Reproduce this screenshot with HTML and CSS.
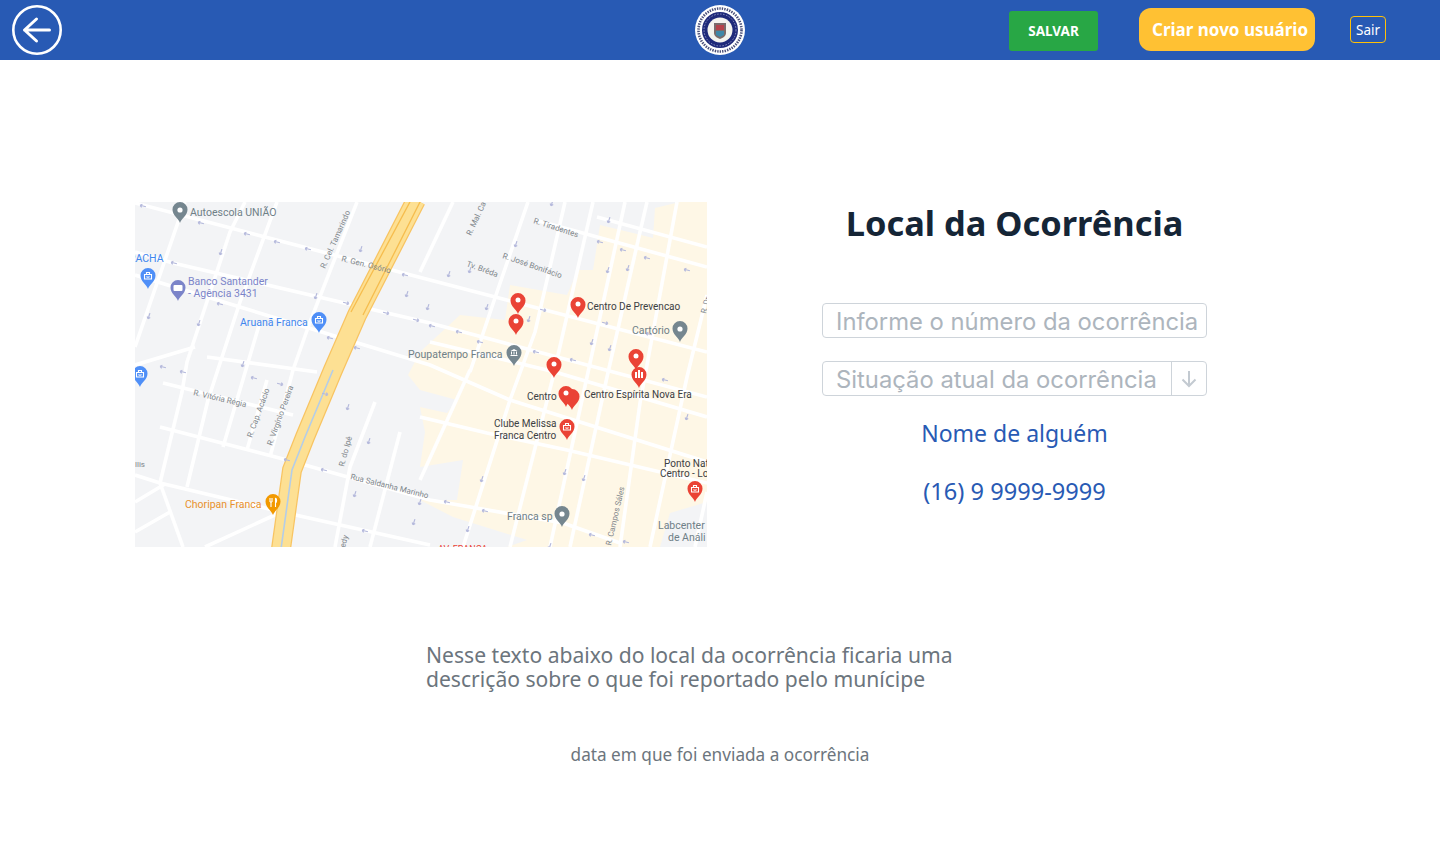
FILE: index.html
```html
<!DOCTYPE html>
<html lang="pt-BR">
<head>
    <meta charset="UTF-8">
    <meta name="viewport" content="width=device-width, initial-scale=1.0">
    <title>Local da Ocorrência</title>
    <link rel="stylesheet" href="styles.css">
</head>
<body>
    <header class="topbar">
        <a class="back" href="#" aria-label="Voltar">
            <svg width="50" height="50" viewBox="0 0 50 50">
                <circle cx="25" cy="25" r="23.7" class="back-ring"/>
                <path d="M12.5 25H37.5M24.5 14L12.5 25L24.5 36" class="back-arrow"/>
            </svg>
        </a>
        <svg class="logo" width="50" height="50" viewBox="0 0 50 50">
            <circle cx="25" cy="25" r="25" fill="#fff"/>
            <circle cx="25" cy="25" r="21.5" fill="none" stroke="#4a4f78" stroke-width="2.6" stroke-dasharray="1.4 1.1"/>
            <circle cx="25" cy="25" r="18" fill="#1f2a7a"/>
            <circle cx="25" cy="25" r="16" fill="none" stroke="#8f95c4" stroke-width="1" stroke-dasharray="1.5 1.5"/>
            <circle cx="25" cy="25" r="12.5" fill="#f4f3ee"/>
            <path d="M19 18H31V28C31 31 28 33 25 34C22 33 19 31 19 28Z" fill="#7a6a6a"/>
            <path d="M21 20H29V25H21Z" fill="#b5424a"/>
            <path d="M21 26H29V30L25 32L21 30Z" fill="#3f87a8"/>
        </svg>
        <div class="actions">
            <button class="btn-save">SALVAR</button>
            <button class="btn-new">Criar novo usuário</button>
            <button class="btn-exit">Sair</button>
        </div>
    </header>

    <main>
        <section class="details">
            <svg class="map" width="572" height="345" viewBox="0 0 572 345">
                <defs>
                    <g id="pin">
                        <path d="M0 13C-1.5 8.5-7.5 5.5-7.5-.5A7.5 7.5 0 1 1 7.5-.5C7.5 5.5 1.5 8.5 0 13Z"/>
                    </g>
                    <g id="bag">
                        <path d="M-3.5-1.5H3.5V3H-3.5ZM-1.5-1.5V-3.5H1.5V-1.5M-1.5 .5C-1 1.5 1 1.5 1.5 .5" class="bag-icon"/>
                    </g>
                    <path id="tick" d="M-3 0H3M-3 0L-1 -1.6M-3 0L-1 1.6"/>
                </defs>

                <rect width="572" height="345" fill="#f3f4f6"/>
                <path d="M545 0H572V345H372L392 338L318 315L285 298L322 298L328 258L285 265L290 230L285 205L312 211L322 198L285 188L273 173L285 150L325 113L370 118L375 83L432 93L443 68L458 68L462 43L465 23L498 31L518 36L520 6Z" fill="#fef7e6"/>
                <path d="M535 311L572 300V345H525Z" fill="#f3f4f6"/>

                <g class="roads">
                    <path d="M0 1L295 78L572 150"/>
                    <path d="M0 50L38 61L295 121L572 195"/>
                    <path d="M0 73L295 163L375 198L572 260"/>
                    <path d="M28 181L158 213"/>
                    <path d="M25 225L152 258L295 298L428 321L485 341"/>
                    <path d="M0 273L25 281L138 308L295 343"/>
                    <path d="M285 215L352 231L432 248L572 281"/>
                    <path d="M295 140L420 170L572 215"/>
                    <path d="M462 15L572 45"/>
                    <path d="M400 18L572 65"/>
                    <path d="M0 145L50 0"/>
                    <path d="M25 281L47 190L52 160L95 30L110 0"/>
                    <path d="M52 285L73 198L105 100L142 0"/>
                    <path d="M88 245L125 120"/>
                    <path d="M135 255L158 168L175 120L222 0"/>
                    <path d="M112 248L132 178"/>
                    <path d="M285 70L318 0"/>
                    <path d="M335 170L362 90L393 0"/>
                    <path d="M285 278L335 168"/>
                    <path d="M328 345L375 198L400 130L430 0"/>
                    <path d="M375 345L418 175L458 0"/>
                    <path d="M415 345L452 175L490 0"/>
                    <path d="M435 345L472 175L505 30L512 0"/>
                    <path d="M485 345L505 201L542 0"/>
                    <path d="M515 345L552 175L572 93"/>
                    <path d="M560 345L572 290"/>
                    <path d="M0 163L60 145"/>
                    <path d="M200 345L215 265L240 200"/>
                    <path d="M235 345L265 230"/>
                    <path d="M25 281L48 345"/>
                    <path d="M0 300L30 282"/>
                    <path d="M70 345L142 312"/>
                    <path d="M0 330L35 310"/>
                    <path d="M72 155L182 170"/>
                </g>

                <path d="M281-2L222 113L198 168L170 235L157 268L146 347" class="hw-edge"/>
                <path d="M281-2L222 113L198 168L170 235L157 268L146 347" class="hw-fill"/>
                <path d="M276-2L216 110M286-2L228 113" class="hw-line"/>
                <path d="M198 168L170 235L157 268L146 347" class="hw-water"/>

                <g class="ticks">
                    <use href="#tick" transform="translate(8 4) rotate(14)"/>
                    <use href="#tick" transform="translate(66 21) rotate(14)"/>
                    <use href="#tick" transform="translate(112 32) rotate(14)"/>
                    <use href="#tick" transform="translate(142 40) rotate(14)"/>
                    <use href="#tick" transform="translate(173 47) rotate(14)"/>
                    <use href="#tick" transform="translate(270 73) rotate(14)"/>
                    <use href="#tick" transform="translate(39 61) rotate(14)"/>
                    <use href="#tick" transform="translate(211 101) rotate(194)"/>
                    <use href="#tick" transform="translate(251 111) rotate(194)"/>
                    <use href="#tick" transform="translate(281 118) rotate(194)"/>
                    <use href="#tick" transform="translate(85 102) rotate(14)"/>
                    <use href="#tick" transform="translate(195 136) rotate(14)"/>
                    <use href="#tick" transform="translate(222 146) rotate(14)"/>
                    <use href="#tick" transform="translate(28 165) rotate(14)"/>
                    <use href="#tick" transform="translate(48 170) rotate(14)"/>
                    <use href="#tick" transform="translate(119 176) rotate(14)"/>
                    <use href="#tick" transform="translate(145 182) rotate(194)"/>
                    <use href="#tick" transform="translate(190 192) rotate(194)"/>
                    <use href="#tick" transform="translate(152 258) rotate(14)"/>
                    <use href="#tick" transform="translate(189 268) rotate(14)"/>
                    <use href="#tick" transform="translate(230 329) rotate(14)"/>
                    <use href="#tick" transform="translate(297 124) rotate(14)"/>
                    <use href="#tick" transform="translate(324 130) rotate(14)"/>
                    <use href="#tick" transform="translate(345 140) rotate(14)"/>
                    <use href="#tick" transform="translate(408 108) rotate(194)"/>
                    <use href="#tick" transform="translate(470 121) rotate(194)"/>
                    <use href="#tick" transform="translate(514 132) rotate(14)"/>
                    <use href="#tick" transform="translate(465 40) rotate(14)"/>
                    <use href="#tick" transform="translate(488 48) rotate(14)"/>
                    <use href="#tick" transform="translate(512 56) rotate(14)"/>
                    <use href="#tick" transform="translate(552 68) rotate(14)"/>
                    <use href="#tick" transform="translate(401 150) rotate(14)"/>
                    <use href="#tick" transform="translate(438 158) rotate(14)"/>
                    <use href="#tick" transform="translate(530 178) rotate(14)"/>
                    <use href="#tick" transform="translate(312 300) rotate(14)"/>
                    <use href="#tick" transform="translate(350 309) rotate(14)"/>
                    <use href="#tick" transform="translate(457 333) rotate(14)"/>
                    <use href="#tick" transform="translate(491 340) rotate(14)"/>
                    <use href="#tick" transform="translate(86 50) rotate(-72)"/>
                    <use href="#tick" transform="translate(14 114) rotate(-72)"/>
                    <use href="#tick" transform="translate(64 121) rotate(-72)"/>
                    <use href="#tick" transform="translate(181 94) rotate(-72)"/>
                    <use href="#tick" transform="translate(272 92) rotate(-72)"/>
                    <use href="#tick" transform="translate(226 47) rotate(-72)"/>
                    <use href="#tick" transform="translate(108 162) rotate(-72)"/>
                    <use href="#tick" transform="translate(213 205) rotate(-72)"/>
                    <use href="#tick" transform="translate(234 239) rotate(-72)"/>
                    <use href="#tick" transform="translate(220 292) rotate(-72)"/>
                    <use href="#tick" transform="translate(285 300) rotate(-72)"/>
                    <use href="#tick" transform="translate(279 320) rotate(-72)"/>
                    <use href="#tick" transform="translate(335 68) rotate(-72)"/>
                    <use href="#tick" transform="translate(381 42) rotate(-72)"/>
                    <use href="#tick" transform="translate(417 1) rotate(-72)"/>
                    <use href="#tick" transform="translate(474 18) rotate(-72)"/>
                    <use href="#tick" transform="translate(473 68) rotate(-72)"/>
                    <use href="#tick" transform="translate(493 66) rotate(-72)"/>
                    <use href="#tick" transform="translate(314 72) rotate(-72)"/>
                    <use href="#tick" transform="translate(293 105) rotate(-72)"/>
                    <use href="#tick" transform="translate(352 105) rotate(-72)"/>
                    <use href="#tick" transform="translate(394 117) rotate(-72)"/>
                    <use href="#tick" transform="translate(457 140) rotate(-72)"/>
                    <use href="#tick" transform="translate(475 146) rotate(-72)"/>
                    <use href="#tick" transform="translate(552 215) rotate(-72)"/>
                    <use href="#tick" transform="translate(347 277) rotate(-72)"/>
                    <use href="#tick" transform="translate(430 270) rotate(-72)"/>
                    <use href="#tick" transform="translate(449 276) rotate(-72)"/>
                    <use href="#tick" transform="translate(333 327) rotate(-72)"/>
                    <use href="#tick" transform="translate(415 344) rotate(-72)"/>
                </g>

                <g class="street">
                    <text transform="translate(206 59) rotate(14)">R. Gen. Osório</text>
                    <text transform="translate(190 67) rotate(-66)">R. Cel. Tamarindo</text>
                    <text transform="translate(398 21) rotate(18)">R. Tiradentes</text>
                    <text transform="translate(367 56) rotate(19)">R. José Bonifácio</text>
                    <text transform="translate(331 64) rotate(20)">Tv. Brêda</text>
                    <text transform="translate(336 34) rotate(-65)">R. Mal. Ca</text>
                    <text transform="translate(571 112) rotate(-75)">R. Dr</text>
                    <text transform="translate(58 193) rotate(13)">R. Vitória Régia</text>
                    <text transform="translate(117 236) rotate(-70)">R. Cap. Acácio</text>
                    <text transform="translate(137 244) rotate(-70)">R. Virgínio Pereira</text>
                    <text transform="translate(209 265) rotate(-75)">R. do Ipê</text>
                    <text transform="translate(215 277) rotate(14)">Rua Saldanha Marinho</text>
                    <text transform="translate(476 344) rotate(-77)">R. Campos Sáles</text>
                    <text transform="translate(210 346) rotate(-75)">edy</text>
                    <text x="0" y="265">llis</text>
                </g>

                <g class="label-gray">
                    <text x="55" y="14">Autoescola UNIÃO</text>
                    <text x="273" y="156">Poupatempo Franca</text>
                    <text x="497" y="132">Cartório</text>
                    <text x="372" y="318">Franca sp</text>
                    <text x="523" y="327">Labcenter</text>
                    <text x="533" y="339">de Análi</text>
                </g>
                <g class="label-blue">
                    <text x="-6" y="60">RACHA</text>
                    <text x="105" y="124">Aruanã Franca</text>
                </g>
                <g class="label-purple">
                    <text x="53" y="83">Banco Santander</text>
                    <text x="53" y="95">- Agência 3431</text>
                </g>
                <text x="50" y="306" class="label-orange">Choripan Franca</text>
                <g class="label-dark">
                    <text x="452" y="108">Centro De Prevencao</text>
                    <text x="449" y="196">Centro Espírita Nova Era</text>
                    <text x="392" y="198">Centro</text>
                    <text x="359" y="225">Clube Melissa</text>
                    <text x="359" y="237">Franca Centro</text>
                    <text x="529" y="265">Ponto Nat</text>
                    <text x="525" y="275">Centro - Lo</text>
                </g>
                <text x="303" y="350" class="label-red">AV. FRANCA</text>

                <g fill="#75868f">
                    <use href="#pin" x="45" y="8"/>
                    <use href="#pin" x="379" y="151"/>
                    <use href="#pin" x="545" y="127"/>
                    <use href="#pin" x="427" y="312"/>
                </g>
                <g fill="#fff">
                    <circle cx="45" cy="8" r="2.6"/>
                    <circle cx="545" cy="127" r="2.6"/>
                    <circle cx="427" cy="312" r="2.6"/>
                    <path d="M375.5 153H382.5V154H375.5ZM376 149.5H377V152.5H376ZM378.5 149.5H379.5V152.5H378.5ZM381 149.5H382V152.5H381ZM375.5 149L379 147L382.5 149Z"/>
                </g>

                <g fill="#4f8ff7">
                    <use href="#pin" x="13" y="74"/>
                    <use href="#pin" x="184" y="118"/>
                    <use href="#pin" x="5" y="172"/>
                </g>
                <use href="#pin" x="43" y="86" fill="#7b84c9"/>
                <rect x="38.5" y="83" width="9" height="6" rx="1" fill="#fff"/>
                <use href="#pin" x="138" y="300" fill="#f29900"/>
                <path d="M135 296V300M137 296V300M135 300H137M136 300V305M140.5 296V305M140.5 296C142 297 142 300 140.5 301" class="fork-icon"/>
                <g class="bags">
                    <use href="#bag" x="13" y="74"/>
                    <use href="#bag" x="184" y="118"/>
                    <use href="#bag" x="5" y="172"/>
                </g>

                <g fill="#ea4335">
                    <use href="#pin" x="383" y="99"/>
                    <use href="#pin" x="381" y="120"/>
                    <use href="#pin" x="443" y="103"/>
                    <use href="#pin" x="419" y="163"/>
                    <use href="#pin" x="501" y="155"/>
                    <use href="#pin" x="504" y="173"/>
                    <use href="#pin" x="437" y="195"/>
                    <use href="#pin" x="431" y="192"/>
                    <use href="#pin" x="432" y="225"/>
                    <use href="#pin" x="560" y="287"/>
                </g>
                <g fill="#fff">
                    <circle cx="383" cy="98" r="2.5"/>
                    <circle cx="381" cy="119" r="2.5"/>
                    <circle cx="443" cy="102" r="2.5"/>
                    <circle cx="419" cy="162" r="2.5"/>
                    <circle cx="501" cy="154" r="2.5"/>
                    <circle cx="431" cy="191" r="2.5"/>
                    <path d="M500 176V170H502V176ZM503 176V168H505V176ZM506 176V170H508V176Z"/>
                </g>
                <g class="bags">
                    <use href="#bag" x="432" y="225"/>
                    <use href="#bag" x="560" y="287"/>
                </g>
            </svg>

            <div class="report">
                <h1>Local da Ocorrência</h1>
                <input class="field" type="text" placeholder="Informe o número da ocorrência">
                <div class="select-field">
                    <span class="select-text">Situação atual da ocorrência</span>
                    <span class="select-arrow">
                        <svg width="16" height="18" viewBox="0 0 16 18"><path d="M8 1V16M1.5 9.5L8 16L14.5 9.5"/></svg>
                    </span>
                </div>
                <p class="contact">Nome de alguém</p>
                <p class="contact phone">(16) 9 9999-9999</p>
            </div>
        </section>

        <p class="description">Nesse texto abaixo do local da ocorrência ficaria uma descrição sobre o que foi reportado pelo munícipe</p>
        <p class="sent-date">data em que foi enviada a ocorrência</p>
    </main>
</body>
</html>
```

FILE: styles.css
```css
* {
    box-sizing: border-box;
}

body {
    margin: 0;
    background-color: #fff;
    font-family: "Noto Sans", sans-serif;
}

.topbar {
    height: 60px;
    background-color: #285ab4;
    display: flex;
    align-items: center;
    padding-left: 12px;
}

.back {
    display: block;
    height: 50px;
}

.back-ring {
    fill: none;
    stroke: #fff;
    stroke-width: 2.6;
}

.back-arrow {
    fill: none;
    stroke: #fff;
    stroke-width: 3;
    stroke-linecap: round;
    stroke-linejoin: round;
}

.logo {
    margin-left: 633px;
}

.actions {
    margin-left: 264px;
    display: flex;
    align-items: center;
}

.actions button {
    font-family: inherit;
    color: #fff;
    cursor: pointer;
    padding: 0;
}

.btn-save {
    width: 89px;
    height: 40px;
    margin-top: 2px;
    background-color: #28a745;
    border: none;
    border-radius: 3px;
    font-size: 13.5px;
    font-weight: 700;
}

.actions .btn-new {
    width: 176px;
    height: 43px;
    margin-left: 41px;
    margin-bottom: 1px;
    padding-left: 13px;
    background-color: #ffc133;
    border: none;
    border-radius: 12px;
    font-size: 17px;
    font-weight: 700;
    text-align: left;
    white-space: nowrap;
}

.btn-exit {
    width: 36px;
    height: 27px;
    margin-left: 35px;
    margin-bottom: 1px;
    background: none;
    border: 1px solid #ffc107;
    border-radius: 4px;
    font-size: 13.5px;
}

.details {
    display: flex;
    padding: 142px 0 0 135px;
}

.map {
    display: block;
    flex-shrink: 0;
}

.roads path {
    fill: none;
    stroke: #fff;
    stroke-width: 3.6;
    stroke-linejoin: round;
}

.hw-edge {
    fill: none;
    stroke: #f8c462;
    stroke-width: 20;
}

.hw-fill {
    fill: none;
    stroke: #fde093;
    stroke-width: 17.5;
}

.hw-line {
    fill: none;
    stroke: #f6bd4e;
    stroke-width: 1.3;
}

.hw-water {
    fill: none;
    stroke: #b4cde8;
    stroke-width: 1.6;
}

.ticks use {
    fill: none;
    stroke: #b5b9dc;
    stroke-width: 1.2;
}

.map text {
    font-family: Roboto, sans-serif;
}

.street text {
    font-size: 8px;
    fill: #80868b;
}

.label-gray text {
    font-size: 10.5px;
    fill: #6f8087;
}

.label-blue text {
    font-size: 10.5px;
    fill: #3f86ee;
}

.label-purple text {
    font-size: 10.5px;
    fill: #7b84c9;
}

.label-orange {
    font-size: 10.5px;
    fill: #e8912d;
}

.label-dark text {
    font-size: 10px;
    fill: #3c4043;
}

.label-red {
    font-size: 9px;
    fill: #ea4335;
}

.bag-icon {
    fill: none;
    stroke: #fff;
    stroke-width: 1.1;
}

.fork-icon {
    fill: none;
    stroke: #fff;
    stroke-width: 1.1;
}

.report {
    width: 385px;
    margin-left: 115px;
    display: flex;
    flex-direction: column;
    align-items: center;
}

.report h1 {
    margin: 0 0 58px;
    height: 43px;
    line-height: 42px;
    font-size: 34.4px;
    font-weight: 700;
    white-space: nowrap;
    color: #152536;
}

.field,
.select-field {
    width: 385px;
    height: 35px;
    border: 1px solid #ced4da;
    border-radius: 4px;
    font-family: Inter, sans-serif;
    font-size: 23.8px;
    color: #adb5bd;
}

.field {
    padding: 2px 2px 0 13px;
    margin-bottom: 23px;
    outline: none;
}

.field::placeholder {
    color: #adb5bd;
    opacity: 1;
}

.select-field {
    display: flex;
    align-items: center;
}

.select-text {
    flex: 1;
    padding: 2px 0 0 13px;
}

.select-arrow {
    width: 35px;
    height: 33px;
    border-left: 1px solid #ced4da;
    display: flex;
    align-items: center;
    justify-content: center;
}

.select-arrow path {
    fill: none;
    stroke: #c3cad1;
    stroke-width: 2;
}

.contact {
    margin: 21px 0 0;
    height: 37px;
    line-height: 32px;
    font-size: 23px;
    color: #285ab4;
}

.phone {
    font-size: 23.6px;
}

.description {
    width: 588px;
    margin: 96px auto 0;
    font-size: 21.1px;
    line-height: 24px;
    color: #6c757d;
}

.sent-date {
    margin: 52px 0 0;
    text-align: center;
    font-size: 17.2px;
    line-height: 24px;
    color: #6c757d;
}
```
